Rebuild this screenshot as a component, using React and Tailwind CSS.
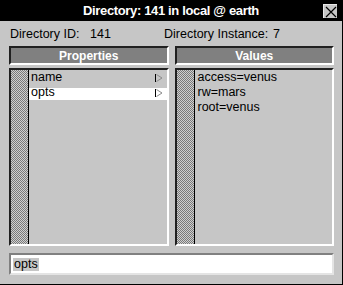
import React from "react";

const Flag = () => (
  <svg width="8" height="10" viewBox="0 0 8 10" className="block">
    <line x1="0.5" y1="1" x2="0.5" y2="9" stroke="#000" strokeWidth="1" />
    <path d="M1.5 1.5 L7 5 L1.5 8.5" fill="none" stroke="#8a8a8a" strokeWidth="1" />
  </svg>
);

const Checker = () => (
  <div className="w-[18px] shrink-0 border-r border-black bg-[repeating-conic-gradient(#7a7a7a_0_25%,#d0d0d0_0_50%)] bg-[length:2px_2px]" />
);

export default function App() {
  const props = ["name", "opts"];
  const values = ["access=venus", "rw=mars", "root=venus"];
  return (
    <div className="w-[343px] h-[285px] bg-[#c6c6c6] flex flex-col border-r border-b border-black font-['Liberation_Sans',Arial,sans-serif] text-black overflow-hidden">
      {/* Title bar */}
      <div className="h-[21px] shrink-0 bg-black relative flex items-center justify-center">
        <span className="text-white font-bold text-[13px] tracking-[-0.35px] leading-none">
          Directory: 141 in local @ earth
        </span>
        <div className="absolute right-[5px] top-[4px] w-[14px] h-[14px] bg-[#c6c6c6] border-t border-l border-[#e8e8e8] flex items-center justify-center">
          <svg width="12" height="12" viewBox="0 0 12 12">
            <path d="M1 1 L11 11 M11 1 L1 11" stroke="#000" strokeWidth="1.2" />
          </svg>
        </div>
      </div>

      {/* Info row */}
      <div className="h-[25px] shrink-0 flex items-center pl-[10px] pt-[1px] text-[12.5px] leading-none">
        <span className="w-[80px]">Directory ID:</span>
        <span className="w-[74px]">141</span>
        <span className="w-[109px]">Directory Instance:</span>
        <span>7</span>
      </div>

      {/* Panels */}
      <div className="grid grid-cols-2 gap-x-[6px] gap-y-[3px] pl-[9px] pr-[8px]">
        <div className="h-[19px] bg-[#808080] border-t-2 border-l-2 border-[#202020] border-b-2 border-r-2 border-b-white border-r-white flex items-center justify-center text-white font-bold text-[12px] leading-none">
          Properties
        </div>
        <div className="h-[19px] bg-[#808080] border-t-2 border-l-2 border-[#202020] border-b-2 border-r-2 border-b-white border-r-white flex items-center justify-center text-white font-bold text-[12px] leading-none">
          Values
        </div>

        <div className="h-[178px] border-t-2 border-l-2 border-[#202020] border-b-2 border-r-2 border-b-white border-r-white flex">
          <Checker />
          <div className="flex-1 flex flex-col text-[12.5px]">
            {props.map((p, i) => (
              <div
                key={p}
                className={
                  "h-[15px] flex items-center justify-between pl-[2px] pr-[4px] leading-none " +
                  (i === 1 ? "bg-[linear-gradient(transparent_3px,white_3px)]" : "")
                }
              >
                <span>{p}</span>
                <Flag />
              </div>
            ))}
          </div>
        </div>

        <div className="h-[178px] border-t-2 border-l-2 border-[#202020] border-b-2 border-r-2 border-b-white border-r-white flex">
          <Checker />
          <div className="flex-1 flex flex-col text-[12.5px]">
            {values.map((v) => (
              <div key={v} className="h-[15px] flex items-center pl-[3px] leading-none">
                {v}
              </div>
            ))}
          </div>
        </div>
      </div>

      {/* Input */}
      <div className="pl-[9px] pr-[8px] mt-[7px]">
        <div className="h-[22px] bg-white border-t-2 border-l-2 border-[#808080] border-b-2 border-r-2 border-b-[#e4e4e4] border-r-[#e4e4e4] flex items-center pl-[2px]">
          <span className="bg-[#c6c6c6] text-[12.5px] leading-[13px] px-[1px]">opts</span>
        </div>
      </div>
    </div>
  );
}
